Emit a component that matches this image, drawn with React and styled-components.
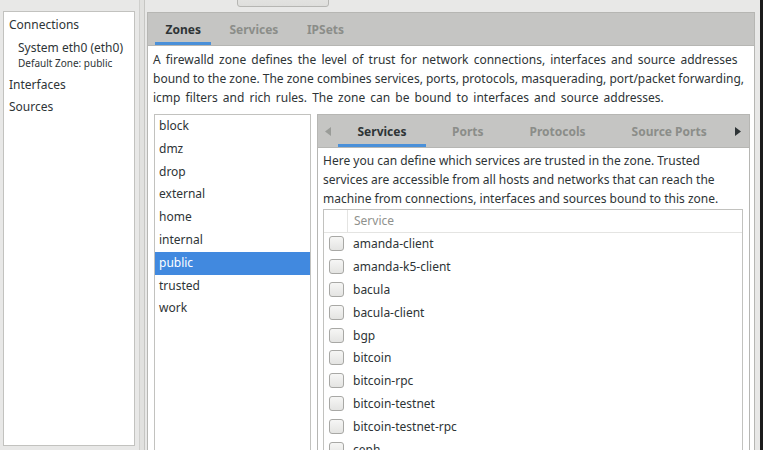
import React from 'react';
import styled, { createGlobalStyle } from 'styled-components';

const GlobalStyle = createGlobalStyle`
  html, body {
    margin: 0;
    padding: 0;
    background: #e8e8e7;
    overflow: hidden;
  }
  body {
    font-family: "Noto Sans", "Open Sans", sans-serif;
    font-size: 12px;
    color: #2e3436;
  }
`;

const Window = styled.div`
  display: flex;
  width: 763px;
  height: 450px;
  overflow: hidden;
  background: #e8e8e7;
`;

const Sidebar = styled.div`
  padding: 11px 0 0 3px;
  flex: none;
`;

const SideBox = styled.div`
  width: 132px;
  height: 435px;
  background: #fff;
  border: 1px solid #c2c2bf;
  padding-top: 2px;
  box-sizing: border-box;
`;

const TreeItem = styled.div`
  height: 22px;
  line-height: 22px;
  padding-left: 5px;
  white-space: nowrap;
`;

const TreeChild = styled.div`
  padding: 3px 0 3px 14px;
  white-space: nowrap;
`;

const ChildTitle = styled.div`
  line-height: 17px;
`;

const ChildSub = styled.div`
  font-size: 10px;
  line-height: 15px;
`;

const Handle = styled.div`
  flex: none;
  width: 4px;
  margin: 0 2px 0 4px;
  border-left: 1px solid #cfcfcd;
  border-right: 1px solid #c6c6c3;
  background: #e1e1df;
`;

const Main = styled.div`
  flex: none;
  width: 608px;
  display: flex;
  flex-direction: column;
`;

const TopStrip = styled.div`
  height: 12px;
  display: flex;
  align-items: flex-end;
  padding-left: 90px;
  overflow: hidden;
`;

const TopButton = styled.div`
  width: 90px;
  height: 20px;
  margin-bottom: 5px;
  border: 1px solid #b6b6b3;
  border-radius: 3px;
  background: linear-gradient(#ececea, #dededc);
`;

const Notebook = styled.div`
  flex: 1;
  display: flex;
  flex-direction: column;
  border: 1px solid #b6b6b3;
  border-bottom: none;
  background: #fff;
  min-height: 0;
`;

const TabBar = styled.div`
  flex: none;
  display: flex;
  align-items: stretch;
  height: ${p => p.$h}px;
  background: #c5c5c3;
  border-bottom: 1px solid #b6b6b3;
  padding-left: ${p => p.$pad}px;
`;

const TabStrip = styled.div`
  display: flex;
  align-items: stretch;
  gap: ${p => p.$gap}px;
  flex: none;
`;

const Tab = styled.div`
  display: flex;
  align-items: center;
  justify-content: center;
  padding: 0 ${p => p.$pad}px;
  box-sizing: border-box;
  color: ${p => (p.$active ? '#2e3436' : '#8b8d89')};
  font-weight: 700;
  box-shadow: ${p => (p.$active ? 'inset 0 -3px 0 #4a90d9' : 'none')};
  white-space: nowrap;
`;

const Arrow = styled.div`
  width: 20px;
  display: flex;
  align-items: center;
  justify-content: center;
  flex: ${p => (p.$right ? 1 : 'none')};
`;

const Desc = styled.div`
  line-height: 19px;
  padding: ${p => p.$pt}px 0 0 ${p => p.$pl}px;
  white-space: nowrap;
  flex: none;
`;

const Line = styled.div`
  word-spacing: ${p => p.$ws || 0}px;
`;

const Body = styled.div`
  flex: 1;
  display: flex;
  gap: 6px;
  padding: 7px 4px 0 6px;
  min-height: 0;
`;

const ZoneList = styled.div`
  width: 157px;
  flex: none;
  border: 1px solid #c2c2bf;
  border-bottom: none;
  box-sizing: border-box;
  background: #fff;
`;

const ZoneItem = styled.div`
  height: 22.8px;
  line-height: 22.8px;
  padding-left: 4px;
  background: ${p => (p.$selected ? '#4189df' : 'transparent')};
  color: ${p => (p.$selected ? '#fff' : 'inherit')};
`;

const ServicePane = styled.div`
  flex: 1;
  display: flex;
  flex-direction: column;
  min-height: 0;
`;

const ServiceList = styled.div`
  margin: 1px 6px 0 5px;
  border: 1px solid #c2c2bf;
  border-bottom: none;
  flex: 1;
  background: #fff;
`;

const HeaderRow = styled.div`
  display: flex;
  height: 21.5px;
  border-bottom: 1px solid #e4e4e2;
  color: #8f918d;
`;

const HeaderCheckCol = styled.div`
  width: 23px;
  border-right: 1px solid #e4e4e2;
`;

const HeaderLabel = styled.div`
  line-height: 22px;
  padding-left: 6px;
`;

const Row = styled.div`
  display: flex;
  align-items: center;
  height: 22.8px;
`;

const Check = styled.div`
  width: 13px;
  height: 13px;
  margin: 0 9px 0 5px;
  border: 1px solid #a8a8a5;
  border-radius: 3px;
  background: linear-gradient(#f6f6f5, #e4e4e2);
  flex: none;
`;

const Spacer = styled.div`
  flex: none;
  width: 5px;
`;

const ScreenEdge = styled.div`
  flex: none;
  width: 3px;
  background: #1b1b1b;
`;

const zones = ['block', 'dmz', 'drop', 'external', 'home', 'internal', 'public', 'trusted', 'work'];

const services = [
  'amanda-client', 'amanda-k5-client', 'bacula', 'bacula-client', 'bgp',
  'bitcoin', 'bitcoin-rpc', 'bitcoin-testnet', 'bitcoin-testnet-rpc', 'ceph',
];

const Triangle = ({ dir, color }) => (
  <svg width="6" height="9" viewBox="0 0 6 9">
    {dir === 'left'
      ? <path d="M6 0 L0 4.5 L6 9 Z" fill={color} />
      : <path d="M0 0 L6 4.5 L0 9 Z" fill={color} />}
  </svg>
);

export default function App() {
  return (
    <Window>
      <GlobalStyle />
      <Sidebar>
        <SideBox>
          <TreeItem>Connections</TreeItem>
          <TreeChild>
            <ChildTitle>System eth0 (eth0)</ChildTitle>
            <ChildSub>Default Zone: public</ChildSub>
          </TreeChild>
          <TreeItem>Interfaces</TreeItem>
          <TreeItem>Sources</TreeItem>
        </SideBox>
      </Sidebar>
      <Handle />
      <Main>
        <TopStrip>
          <TopButton />
        </TopStrip>
        <Notebook>
          <TabBar $h={32} $pad={7}>
            <TabStrip $gap={7.5}>
              <Tab $active $pad={10.5}>Zones</Tab>
              <Tab $pad={10.5}>Services</Tab>
              <Tab $pad={10.5}>IPSets</Tab>
            </TabStrip>
          </TabBar>
          <Desc $pt={4} $pl={5}>
            <Line $ws={2}>A firewalld zone defines the level of trust for network connections, interfaces and source addresses</Line>
            <Line>bound to the zone. The zone combines services, ports, protocols, masquerading, port/packet forwarding,</Line>
            <Line $ws={2}>icmp filters and rich rules. The zone can be bound to interfaces and source addresses.</Line>
          </Desc>
          <Body>
            <ZoneList>
              {zones.map(z => (
                <ZoneItem key={z} $selected={z === 'public'}>{z}</ZoneItem>
              ))}
            </ZoneList>
            <Notebook>
              <TabBar $h={32} $pad={0}>
                <Arrow><Triangle dir="left" color="#9a9c98" /></Arrow>
                <TabStrip $gap={6}>
                  <Tab $active $pad={19.5}>Services</Tab>
                  <Tab $pad={20}>Ports</Tab>
                  <Tab $pad={20}>Protocols</Tab>
                  <Tab $pad={20}>Source Ports</Tab>
                </TabStrip>
                <Arrow $right><Triangle dir="right" color="#2e3436" /></Arrow>
              </TabBar>
              <ServicePane>
                <Desc $pt={3} $pl={5}>
                  <Line>Here you can define which services are trusted in the zone. Trusted</Line>
                  <Line>services are accessible from all hosts and networks that can reach the</Line>
                  <Line>machine from connections, interfaces and sources bound to this zone.</Line>
                </Desc>
                <ServiceList>
                  <HeaderRow>
                    <HeaderCheckCol />
                    <HeaderLabel>Service</HeaderLabel>
                  </HeaderRow>
                  {services.map(s => (
                    <Row key={s}>
                      <Check />
                      {s}
                    </Row>
                  ))}
                </ServiceList>
              </ServicePane>
            </Notebook>
          </Body>
        </Notebook>
      </Main>
      <Spacer />
      <ScreenEdge />
    </Window>
  );
}
